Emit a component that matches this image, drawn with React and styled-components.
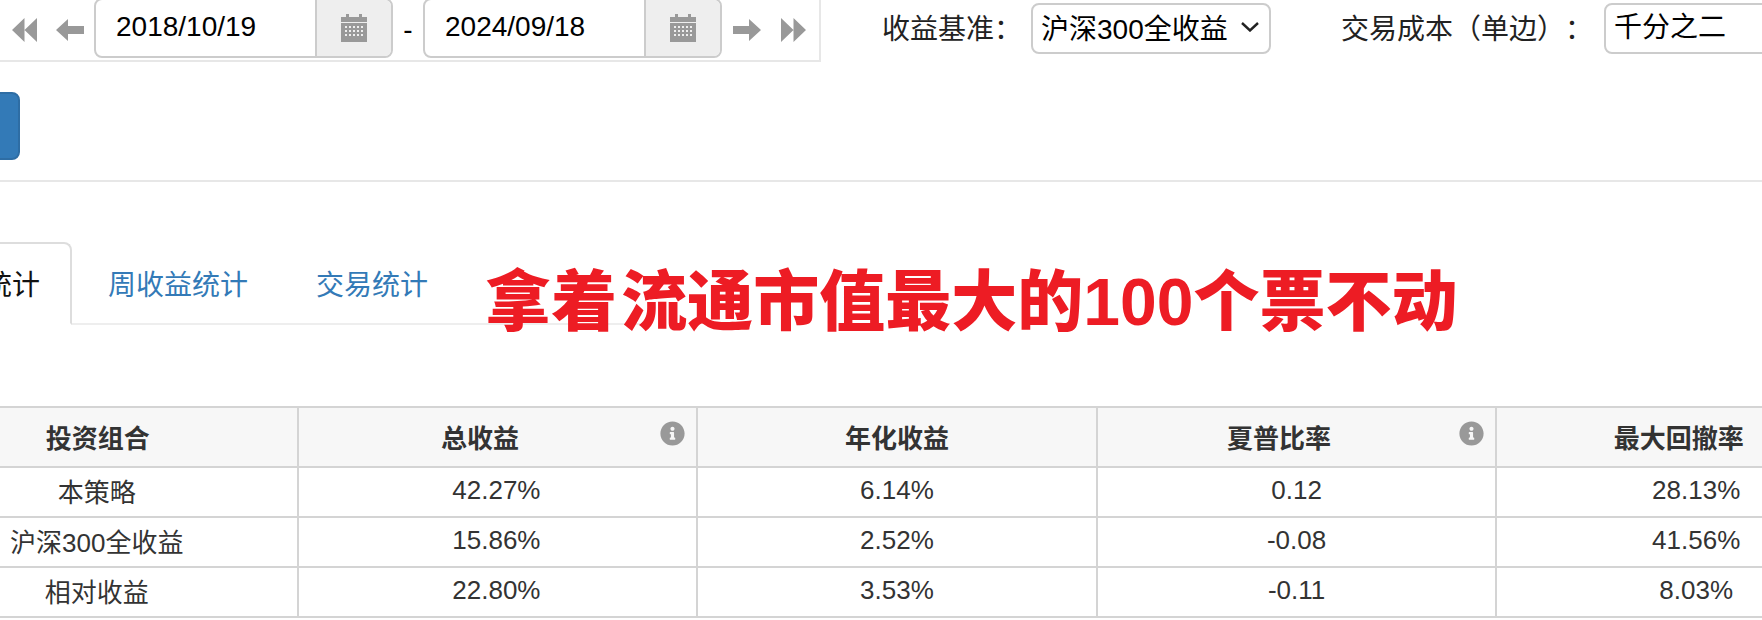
import React from "react";
import styled, { createGlobalStyle } from "styled-components";
import { FaInfoCircle } from "react-icons/fa";

const GlobalStyle = createGlobalStyle`
  html, body {
    margin: 0;
    padding: 0;
    background: #fff;
    overflow: hidden;
  }
  body {
    font-family: "Liberation Sans", "Noto Sans CJK SC", sans-serif;
    color: #333;
    text-spacing-trim: space-all;
  }
`;

//Data
const rows = [
  ["本策略", "42.27%", "6.14%", "0.12", "28.13%"],
  ["沪深300全收益", "15.86%", "2.52%", "-0.08", "41.56%"],
  ["相对收益", "22.80%", "3.53%", "-0.11", "8.03%"],
];

const columns = [
  { title: "投资组合" },
  { title: "总收益", info: true },
  { title: "年化收益" },
  { title: "夏普比率", info: true },
  { title: "最大回撤率", info: true },
];

//Icons
const DoubleBack = () => (
  <NavIcon viewBox="0 0 25 24" $w={25} $h={24}>
    <path d="M12.5 0v24L0 12zM25 0v24L12.5 12z" />
  </NavIcon>
);
const DoubleForward = () => (
  <NavIcon viewBox="0 0 25 24" $w={25} $h={24}>
    <path d="M0 0v24l12.5-12zM12.5 0v24L25 12z" />
  </NavIcon>
);
const ArrowBack = () => (
  <NavIcon viewBox="0 0 28 22" $w={28} $h={22}>
    <path d="M0 11 12 0v7h16v8H12v7z" />
  </NavIcon>
);
const ArrowForward = () => (
  <NavIcon viewBox="0 0 28 22" $w={28} $h={22}>
    <path d="M28 11 16 0v7H0v8h16v7z" />
  </NavIcon>
);
const CalendarIcon = () => (
  <svg width="26" height="28" viewBox="0 0 26 28" fill="#999">
    <path d="M5 0h3v3h10V0h3v3h5v5H0V3h5z" />
    <path
      fillRule="evenodd"
      d="M0 9h26v19H0zM4 12v2h2v-2zm4 0v2h2v-2zm4 0v2h2v-2zm4 0v2h2v-2zm4 0v2h2v-2zM4 16v2h2v-2zm4 0v2h2v-2zm4 0v2h2v-2zm4 0v2h2v-2zm4 0v2h2v-2zM4 20v2h2v-2zm4 0v2h2v-2zm4 0v2h2v-2zm4 0v2h2v-2zm4 0v2h2v-2z"
    />
  </svg>
);

const DateField = ({ value }) => (
  <DateGroup>
    <DateValue>{value}</DateValue>
    <DateAddon>
      <CalendarIcon />
    </DateAddon>
  </DateGroup>
);

const App = () => {
  return (
    <Page>
      <GlobalStyle />
      <TopBar>
        <DateBar>
          <DoubleBack />
          <ArrowBack />
          <DateField value="2018/10/19" />
          <Dash>-</Dash>
          <DateField value="2024/09/18" />
          <ArrowForward />
          <DoubleForward />
        </DateBar>
        <Filters>
          <Label>收益基准：</Label>
          <Select>
            沪深300全收益
            <svg width="18" height="10" viewBox="0 0 18 10" fill="none" stroke="#222" strokeWidth="2.4">
              <path d="M1 1l8 7.5L17 1" />
            </svg>
          </Select>
          <CostLabel>交易成本（单边）：</CostLabel>
          <CostInput>千分之二</CostInput>
        </Filters>
      </TopBar>

      <ButtonRow>
        <PrimaryButton />
      </ButtonRow>
      <Divider />

      <TabWrap>
        <Tabs>
          <Tab $active>月收益统计</Tab>
          <Tab>周收益统计</Tab>
          <Tab>交易统计</Tab>
        </Tabs>
        <Overlay>拿着 流通市值最大的100个票不动</Overlay>
      </TabWrap>

      <Table>
        <thead>
          <tr>
            {columns.map((col) => (
              <HeadCell key={col.title} $shift={col.info}>
                {col.title}
                {col.info && (
                  <InfoMark>
                    <FaInfoCircle />
                  </InfoMark>
                )}
              </HeadCell>
            ))}
          </tr>
        </thead>
        <tbody>
          {rows.map((row) => (
            <tr key={row[0]}>
              {row.map((cell, i) => (
                <Cell key={i}>{cell}</Cell>
              ))}
            </tr>
          ))}
        </tbody>
      </Table>
    </Page>
  );
};

const Page = styled.div`
  width: 1762px;
  height: 620px;
  overflow: hidden;
  background: #fff;
`;

const TopBar = styled.div`
  display: flex;
  align-items: flex-start;
  height: 62px;
`;

const DateBar = styled.div`
  width: 821px;
  height: 62px;
  box-sizing: border-box;
  border-right: 2px solid #e7e7e7;
  border-bottom: 2px solid #e7e7e7;
  padding-left: 12px;
  display: flex;
  align-items: center;
  flex-shrink: 0;
`;

const NavIcon = styled.svg`
  width: ${(p) => p.$w}px;
  height: ${(p) => p.$h}px;
  fill: #999;
  flex-shrink: 0;
  &:nth-child(1) {
    margin-right: 19px;
  }
  &:nth-child(2) {
    margin-right: 10px;
  }
  &:nth-child(6) {
    margin-left: 11px;
  }
  &:nth-child(7) {
    margin-left: 20px;
  }
`;

const DateGroup = styled.div`
  width: 299px;
  height: 60px;
  margin-top: -4px;
  box-sizing: border-box;
  border: 2px solid #ccc;
  border-radius: 8px;
  display: flex;
  overflow: hidden;
  flex-shrink: 0;
`;

const DateValue = styled.div`
  flex: 1;
  padding-left: 20px;
  font-size: 28px;
  line-height: 53px;
  color: #000;
`;

const DateAddon = styled.div`
  width: 76px;
  box-sizing: border-box;
  border-left: 2px solid #ccc;
  background: #eee;
  display: flex;
  align-items: center;
  justify-content: center;
`;

const Dash = styled.span`
  width: 30px;
  text-align: center;
  font-size: 28px;
  color: #000;
`;

const Filters = styled.div`
  display: flex;
  align-items: center;
  height: 56px;
  padding-left: 61px;
  flex-shrink: 0;
`;

const Label = styled.span`
  width: 149px;
  padding-bottom: 2px;
  font-size: 28px;
  color: #222;
  white-space: nowrap;
`;

const Select = styled.div`
  width: 240px;
  height: 51px;
  box-sizing: border-box;
  border: 2px solid #ccc;
  border-radius: 8px;
  padding: 0 10px 2px 8px;
  display: flex;
  align-items: center;
  justify-content: space-between;
  font-size: 28px;
  color: #000;
  white-space: nowrap;
`;

const CostLabel = styled(Label)`
  width: 252px;
  margin-left: 70px;
  margin-right: 11px;
`;

const CostInput = styled.div`
  width: 240px;
  height: 51px;
  box-sizing: border-box;
  border: 2px solid #ccc;
  border-radius: 8px;
  padding: 0 8px;
  line-height: 45px;
  font-size: 28px;
  color: #000;
  flex-shrink: 0;
`;

const ButtonRow = styled.div`
  padding-top: 30px;
  height: 68px;
  margin-left: -80px;
`;

const PrimaryButton = styled.div`
  width: 100px;
  height: 68px;
  box-sizing: border-box;
  background: #337ab7;
  border: 2px solid #2e6da4;
  border-radius: 8px;
`;

const Divider = styled.div`
  margin-top: 20px;
  height: 2px;
  background: #e7e7e7;
`;

const TabWrap = styled.div`
  position: relative;
  margin-top: 60px;
`;

// the rule under the tabs stops behind the red note, it does not reach the page edge
const Tabs = styled.div`
  display: flex;
  margin-left: -132px;
  width: 772px;
  height: 83px;
  box-sizing: border-box;
  border-bottom: 2px solid #eee;
`;

const Tab = styled.div`
  height: 83px;
  box-sizing: border-box;
  padding: 0 30px;
  margin-right: 4px;
  border: 2px solid ${(p) => (p.$active ? "#ddd" : "transparent")};
  border-bottom-color: ${(p) => (p.$active ? "#fff" : "transparent")};
  border-radius: 8px 8px 0 0;
  background: ${(p) => (p.$active ? "#fff" : "transparent")};
  font-size: 28px;
  line-height: 84px;
  color: ${(p) => (p.$active ? "#111" : "#337ab7")};
  white-space: nowrap;
`;

const Overlay = styled.div`
  position: absolute;
  left: 485px;
  top: 22px;
  font-family: "Liberation Sans", "Noto Sans CJK SC", sans-serif;
  font-size: 66px;
  font-weight: 900;
  line-height: 76px;
  word-spacing: -14px;
  color: #ed1c24;
  white-space: nowrap;
`;

const Table = styled.table`
  margin-top: 81px;
  margin-left: -103px;
  width: 2000px;
  table-layout: fixed;
  border-collapse: collapse;
  font-size: 26px;
  color: #333;
`;

const HeadCell = styled.th`
  position: relative;
  height: 60px;
  padding: 0 ${(p) => (p.$shift ? "35px" : "0")} 2px 0;
  box-sizing: border-box;
  border: 2px solid #d4d4d4;
  background: #f7f7f7;
  font-weight: 700;
  font-size: 26px;
  text-align: center;
`;

const Cell = styled.td`
  height: 50px;
  padding: 0 0 3px;
  box-sizing: border-box;
  border: 2px solid #d4d4d4;
  font-size: 26px;
  text-align: center;
  &:nth-child(-n + 2) {
    padding-right: 2px;
  }
`;

const InfoMark = styled.span`
  position: absolute;
  top: 13px;
  right: 11px;
  display: flex;
  font-size: 25px;
  color: #999;
`;

export default App;
